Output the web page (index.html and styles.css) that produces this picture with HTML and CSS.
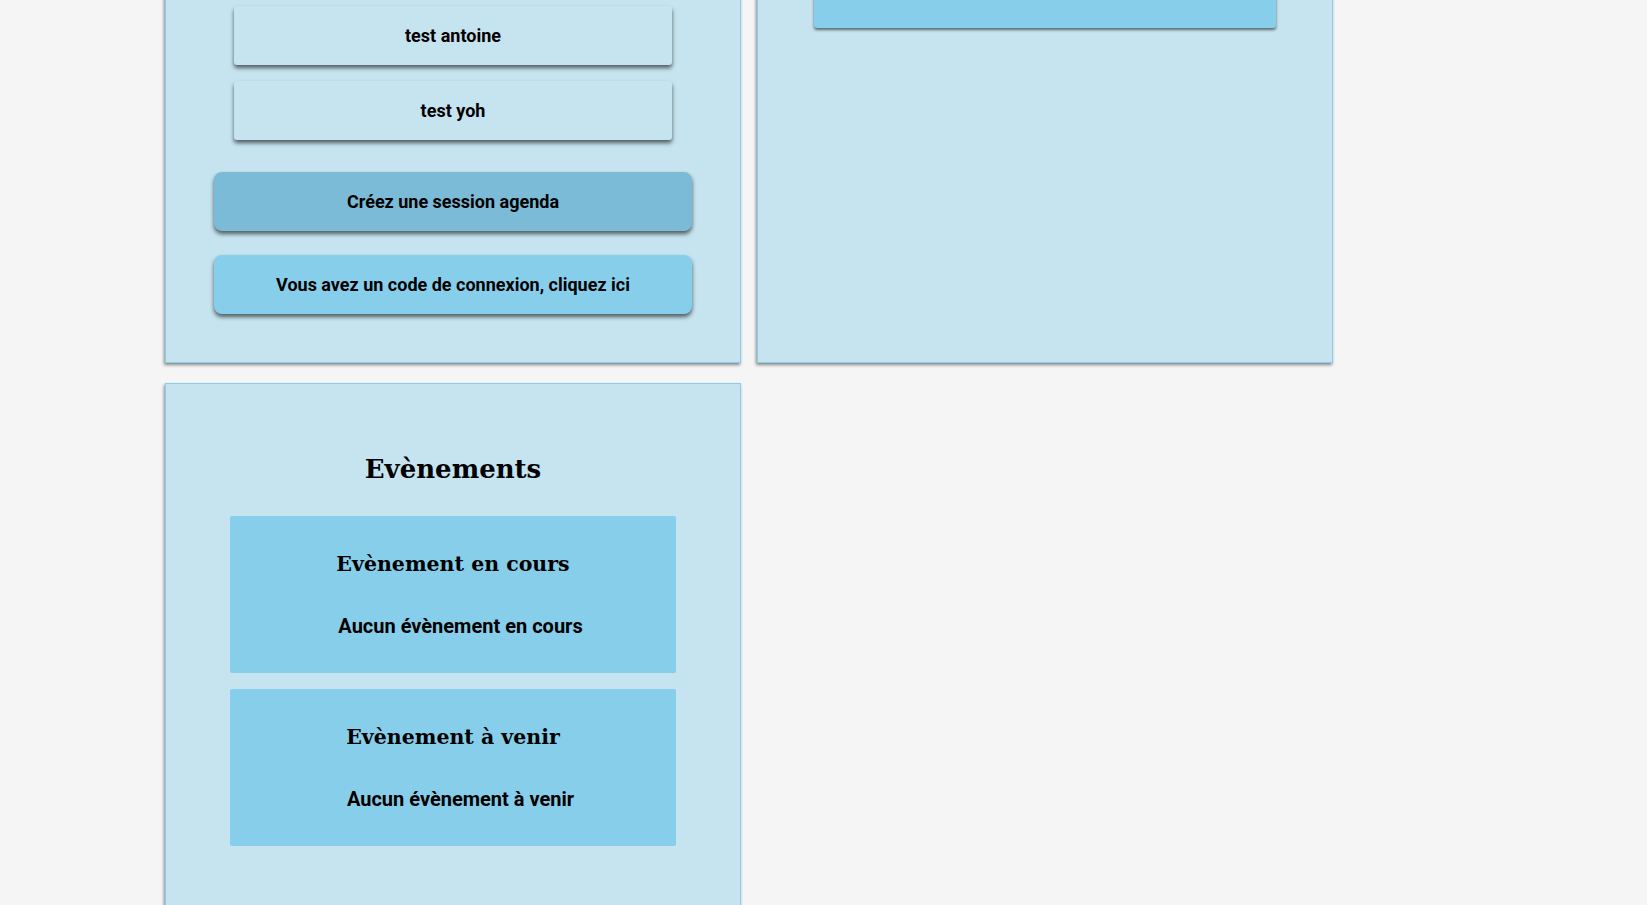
FILE: index.html
```html
<!DOCTYPE html>
<html lang="fr">
<head>
<meta charset="utf-8">
<title>Agenda</title>
<link rel="stylesheet" href="styles.css">
</head>
<body>
<main class="grid">
  <section class="card card-sessions">
    <div class="session-list">
      <button class="session-btn">test antoine</button>
      <button class="session-btn">test yoh</button>
    </div>
    <button class="action-btn action-create">Créez une session agenda</button>
    <button class="action-btn action-code">Vous avez un code de connexion, cliquez ici</button>
  </section>
  <section class="card card-right">
    <div class="right-bar"></div>
  </section>
  <section class="card card-events">
    <h2 class="events-title">Evènements</h2>
    <div class="event-box">
      <h3 class="event-heading">Evènement en cours</h3>
      <p class="event-empty">Aucun évènement en cours</p>
    </div>
    <div class="event-box">
      <h3 class="event-heading">Evènement à venir</h3>
      <p class="event-empty">Aucun évènement à venir</p>
    </div>
  </section>
</main>
</body>
</html>
```
FILE: styles.css
```css
html, body {
  margin: 0;
  padding: 0;
  background: #f5f5f5;
  font-family: Roboto, "Liberation Sans", sans-serif;
  color: #000;
  overflow: hidden;
}

.grid {
  display: grid;
  grid-template-columns: 576px 576px;
  column-gap: 16px;
  row-gap: 20px;
  padding-left: 165px;
  margin-top: -120px;
  align-items: stretch;
}

.card {
  background: #c6e4f0;
  border: 1px solid #87ceeb;
  box-shadow: -1px 2px 3px rgba(0, 0, 0, 0.45);
  box-sizing: border-box;
}

.card-sessions {
  display: flex;
  flex-direction: column;
  align-items: center;
  padding-top: 125px;
  padding-bottom: 48px;
}

.session-list {
  display: flex;
  flex-direction: column;
  gap: 16px;
}

.session-btn {
  width: 438px;
  height: 59px;
  border: none;
  border-radius: 3px;
  background: #c6e4f0;
  box-shadow: 0 3px 4px rgba(0, 0, 0, 0.6);
  font-family: Roboto, "Liberation Sans", sans-serif;
  font-weight: 700;
  font-size: 18px;
  color: #000;
}

.action-btn {
  width: 478px;
  height: 59px;
  border: none;
  border-radius: 8px;
  box-shadow: 0 3px 4px rgba(0, 0, 0, 0.6);
  font-family: Roboto, "Liberation Sans", sans-serif;
  font-weight: 700;
  font-size: 18px;
  color: #000;
}

.action-create {
  margin-top: 32px;
  background: #7bbbd8;
}

.action-code {
  margin-top: 24px;
  background: #87ceeb;
}

.card-right {
  display: flex;
  justify-content: center;
}

.right-bar {
  width: 462px;
  height: 147px;
  background: #87ceeb;
  border-radius: 0 0 3px 3px;
  box-shadow: 0 2px 3px rgba(0, 0, 0, 0.55);
}

.card-events {
  grid-column: 1;
  display: flex;
  flex-direction: column;
  align-items: center;
  padding-top: 72px;
  padding-bottom: 60px;
  min-height: 600px;
}

.events-title {
  margin: 0 0 34px;
  font-family: "DejaVu Serif", "Liberation Serif", serif;
  font-weight: 700;
  font-size: 26px;
  line-height: 1;
}

.event-box {
  width: 446px;
  height: 157px;
  background: #87ceeb;
  border-radius: 2px;
  display: flex;
  flex-direction: column;
  align-items: center;
  box-sizing: border-box;
  padding-top: 34px;
  margin-bottom: 16px;
}

.event-heading {
  margin: 0;
  font-family: "DejaVu Serif", "Liberation Serif", serif;
  font-weight: 700;
  font-size: 20.5px;
  line-height: 28px;
}

.event-empty {
  margin: 37px 0 0;
  padding-left: 15px;
  font-weight: 700;
  font-size: 20px;
  line-height: 22px;
}
```
